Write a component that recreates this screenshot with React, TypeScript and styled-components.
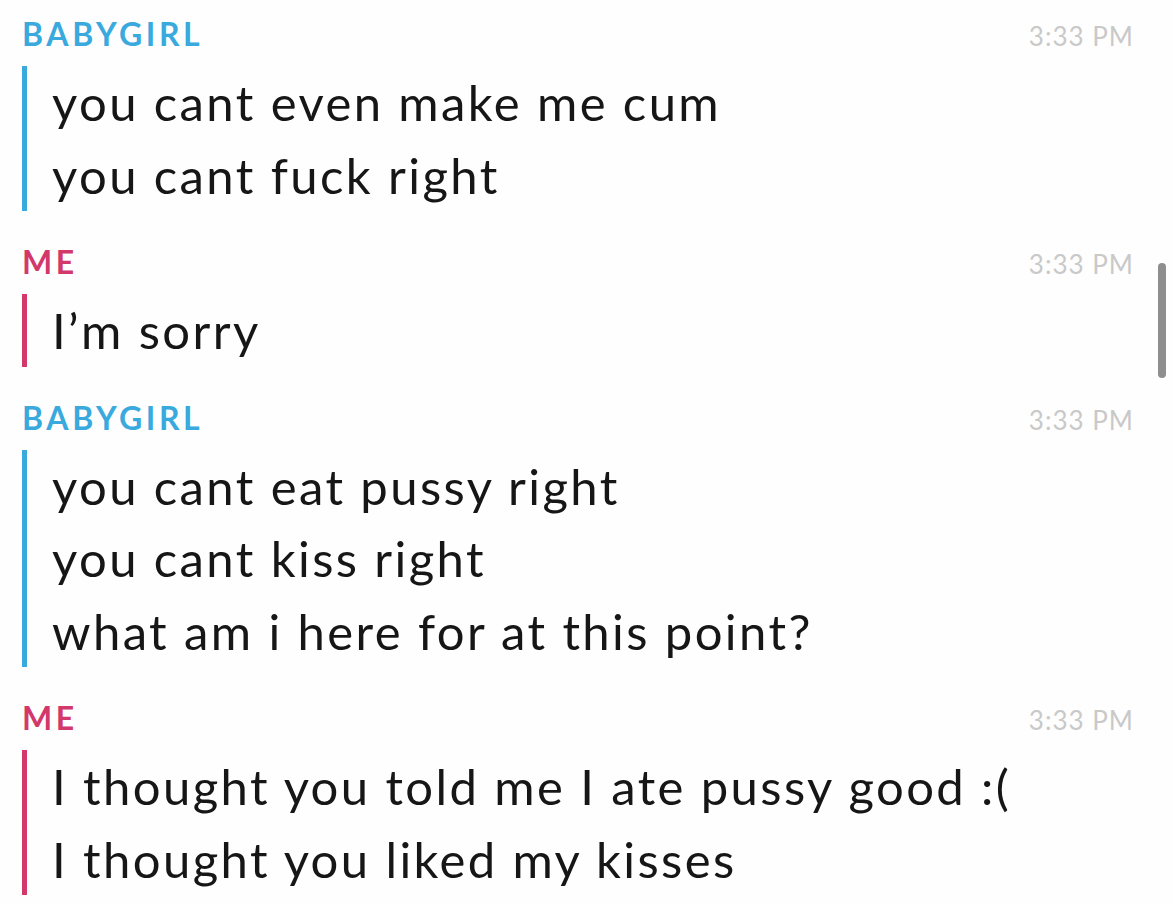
import React from "react";
import styled, { createGlobalStyle } from "styled-components";

const Global = createGlobalStyle`
  html, body { margin: 0; padding: 0; background: #fefefe; }
  body { font-family: Lato, "Open Sans", sans-serif; }
`;

const Page = styled.div`
  position: relative;
  width: 1173px;
  height: 904px;
  overflow: hidden;
  box-sizing: border-box;
  padding: 16px 39px 0 22px;
  display: flex;
  flex-direction: column;
  gap: 33px;
`;

const Group = styled.section`
  display: flex;
  flex-direction: column;
  gap: 14px;
`;

const Header = styled.div`
  display: flex;
  justify-content: space-between;
  align-items: baseline;
  height: 36px;
`;

const Name = styled.span<{ $color: string }>`
  font-family: Lato, sans-serif;
  font-weight: 700;
  font-size: 32px;
  line-height: 36px;
  letter-spacing: 3.6px;
  color: ${(p) => p.$color};
`;

const Time = styled.span`
  font-family: Lato, sans-serif;
  font-size: 26px;
  line-height: 36px;
  color: #c9c9c9;
  letter-spacing: 1px;
`;

const Body = styled.div<{ $color: string }>`
  border-left: 5px solid ${(p) => p.$color};
  padding-left: 25px;
  display: flex;
  flex-direction: column;
`;

const Line = styled.div`
  font-family: Lato, sans-serif;
  font-size: 49px;
  line-height: 72.5px;
  letter-spacing: 2.4px;
  color: #161616;
  white-space: nowrap;
`;

const ScrollThumb = styled.div`
  position: absolute;
  left: 1158px;
  top: 263px;
  width: 8px;
  height: 115px;
  border-radius: 4px;
  background: #8e8e8e;
`;

const BLUE = "#3aaade";
const PINK = "#d3386a";

const messages = [
  { name: "BABYGIRL", color: BLUE, lines: ["you cant even make me cum", "you cant fuck right"] },
  { name: "ME", color: PINK, lines: ["I’m sorry"] },
  {
    name: "BABYGIRL",
    color: BLUE,
    lines: ["you cant eat pussy right", "you cant kiss right", "what am i here for at this point?"],
  },
  { name: "ME", color: PINK, lines: ["I thought you told me I ate pussy good :(", "I thought you liked my kisses"] },
];

export default function App() {
  return (
    <>
      <Global />
      <Page>
        {messages.map((m, i) => (
          <Group key={i}>
            <Header>
              <Name $color={m.color}>{m.name}</Name>
              <Time>3:33 PM</Time>
            </Header>
            <Body $color={m.color}>
              {m.lines.map((l, j) => (
                <Line key={j}>{l}</Line>
              ))}
            </Body>
          </Group>
        ))}
        <ScrollThumb />
      </Page>
    </>
  );
}
